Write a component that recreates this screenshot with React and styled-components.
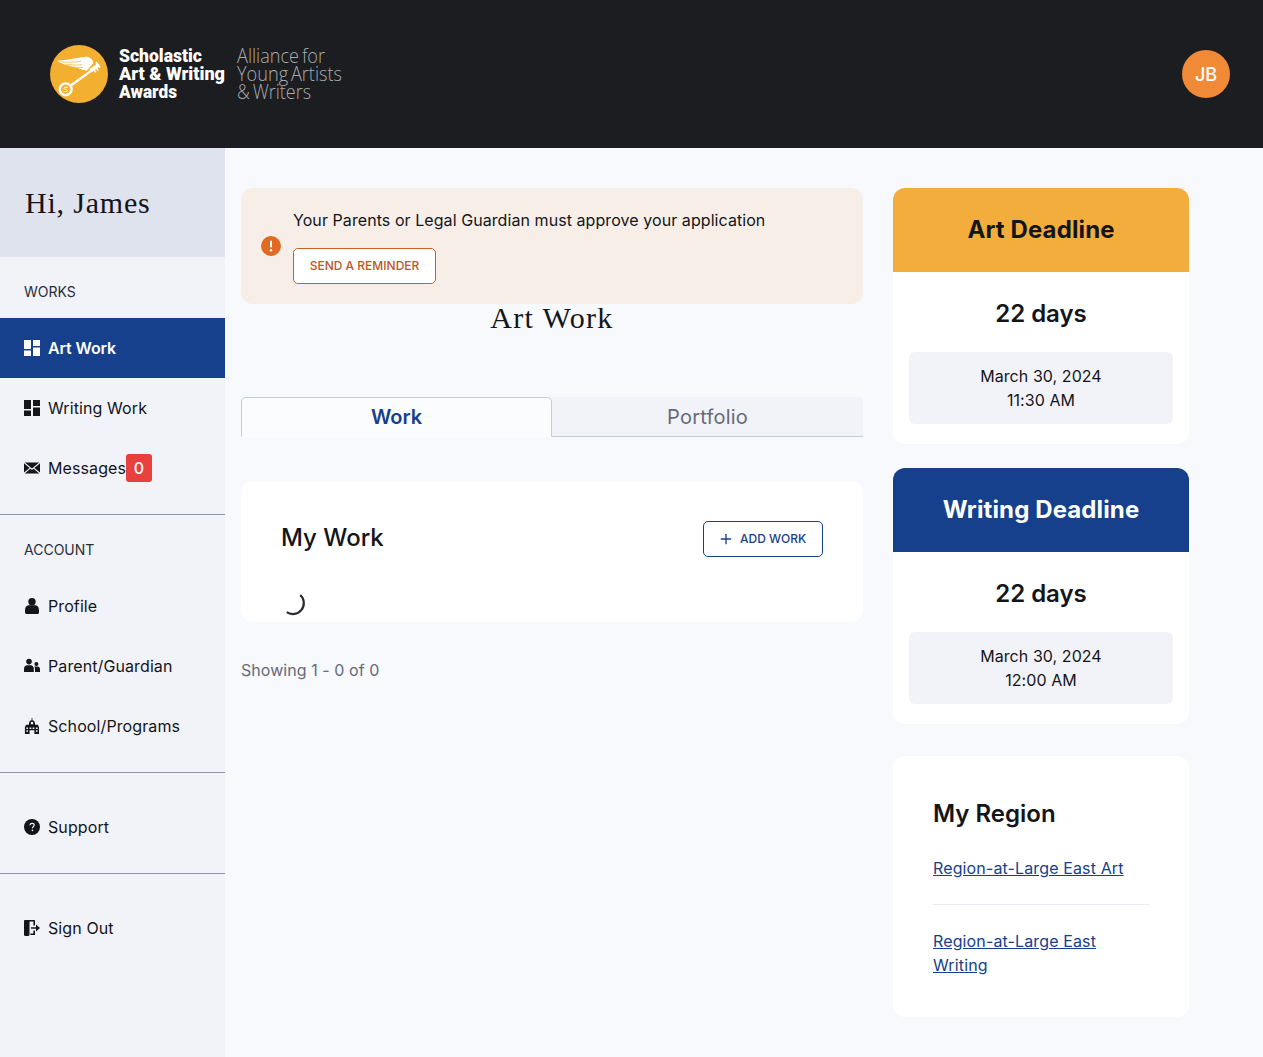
import React from 'react';
import styled, { createGlobalStyle } from 'styled-components';
import { Plus } from 'lucide-react';

const GlobalStyle = createGlobalStyle`
  html, body {
    margin: 0;
    padding: 0;
    background: #f8f9fd;
    font-family: Inter, "Liberation Sans", sans-serif;
    color: #14151a;
  }
  * { box-sizing: border-box; }
`;

const Page = styled.div`
  width: 1263px;
  height: 1057px;
  display: flex;
  flex-direction: column;
  overflow: hidden;
`;

const Header = styled.header`
  height: 148px;
  flex: none;
  background: #1c1d20;
  display: flex;
  align-items: center;
  justify-content: space-between;
  padding: 0 33px 0 50px;
`;

const LogoMark = styled.svg`
  display: block;
  width: 330px;
  height: 66px;
  flex: none;
  margin-top: 8px;
`;

const BrandLine = styled.text`
  font-family: Roboto, sans-serif;
  font-weight: 900;
  font-size: 18.5px;
  fill: #fff;
`;

const TaglineLine = styled.text`
  font-family: "Open Sans", sans-serif;
  font-weight: 300;
  font-size: 19.6px;
  word-spacing: -2px;
  fill: #a9aaad;
`;

const Avatar = styled.div`
  width: 48px;
  height: 48px;
  border-radius: 50%;
  background: #f08a36;
  color: #fff;
  font-size: 18px;
  font-weight: 500;
  display: flex;
  align-items: center;
  justify-content: center;
`;

const Body = styled.div`
  flex: 1;
  display: flex;
  min-height: 0;
`;

const Sidebar = styled.aside`
  width: 225px;
  flex: none;
  background: #f1f3f9;
`;

const Greeting = styled.div`
  height: 109px;
  background: #dfe3ed;
  padding: 35px 0 0 25px;
  font-family: "Liberation Serif", serif;
  font-size: 30px;
  line-height: 40px;
  letter-spacing: 0.8px;
  color: #14151a;
`;

const NavSection = styled.div`
  padding: ${p => p.$padding};
  border-bottom: ${p => (p.$last ? 'none' : '1px solid #8f96ab')};
`;

const SectionLabel = styled.div`
  height: 61px;
  padding: 26px 0 0 24px;
  font-size: 14px;
  line-height: 18px;
  color: #2b2d36;
`;

const NavItem = styled.a`
  height: 60px;
  padding-left: 24px;
  display: flex;
  align-items: center;
  font-size: 16px;
  letter-spacing: ${p => (p.$active ? '-0.1px' : '0.1px')};
  font-weight: ${p => (p.$active ? 600 : 400)};
  color: ${p => (p.$active ? '#fff' : '#14151a')};
  background: ${p => (p.$active ? '#163f8c' : 'transparent')};
`;

const NavIcon = styled.svg`
  width: 16px;
  height: 16px;
  margin-right: 8px;
  flex: none;
  fill: currentColor;
`;

const CountBadge = styled.span`
  width: 26px;
  height: 28px;
  border-radius: 3px;
  background: #e83f3f;
  color: #fff;
  font-size: 16px;
  font-weight: 500;
  display: flex;
  align-items: center;
  justify-content: center;
`;

const Main = styled.main`
  width: 638px;
  flex: none;
  padding: 40px 0 0 16px;
`;

const Notice = styled.div`
  height: 116px;
  background: #f7eee8;
  border-radius: 12px;
  padding: 0 20px;
  display: flex;
  align-items: center;
  gap: 12px;
`;

const NoticeIcon = styled.svg`
  width: 20px;
  height: 20px;
  flex: none;
`;

const NoticeBody = styled.div`
  display: flex;
  flex-direction: column;
  align-items: flex-start;
  gap: 16px;
  font-size: 16px;
  line-height: 24px;
  letter-spacing: 0.07px;
`;

const ReminderButton = styled.button`
  height: 36px;
  width: 143px;
  padding: 0 0 2px;
  border: 1px solid #ce5f22;
  border-radius: 5px;
  background: #fff;
  color: #c1561e;
  font-family: inherit;
  font-size: 12px;
  font-weight: 500;
`;

const PageTitle = styled.h1`
  margin: 0;
  height: 93px;
  text-align: center;
  font-family: "Liberation Serif", serif;
  font-weight: 400;
  font-size: 30px;
  line-height: 28px;
  letter-spacing: 1.3px;
`;

const Tabs = styled.div`
  display: flex;
  height: 40px;
`;

const Tab = styled.div`
  width: 50%;
  display: flex;
  align-items: center;
  justify-content: center;
  font-size: 20px;
  letter-spacing: ${p => (p.$active ? '0' : '0.2px')};
  font-weight: ${p => (p.$active ? 600 : 400)};
  color: ${p => (p.$active ? '#163f8c' : '#646a7a')};
  background: ${p => (p.$active ? '#fbfcfe' : '#f2f3f8')};
  border: 1px solid #c5cbdb;
  border-width: ${p => (p.$active ? '1px 1px 1px 1px' : '0 0 1px 0')};
  border-bottom-color: ${p => (p.$active ? '#fbfcfe' : '#c5cbdb')};
  border-radius: ${p => (p.$active ? '5px 5px 0 0' : '0 5px 0 0')};
`;

const WorkCard = styled.section`
  margin-top: 44px;
  height: 141px;
  background: #fff;
  border-radius: 12px;
  padding: 39px 40px 0;
  overflow: hidden;
`;

const CardHead = styled.div`
  display: flex;
  align-items: center;
  justify-content: space-between;
  height: 36px;
`;

const CardTitle = styled.h2`
  margin: 0;
  font-size: 24px;
  line-height: 32px;
  font-weight: 500;
  color: #14151a;
`;

const AddButton = styled.button`
  width: 120px;
  height: 36px;
  margin-top: 2px;
  border: 1px solid #163f8c;
  border-radius: 5px;
  background: #fff;
  color: #163f8c;
  font-family: inherit;
  font-size: 12px;
  font-weight: 500;
  display: flex;
  align-items: center;
  gap: 6px;
  padding: 0 0 1px 14px;
`;

const Spinner = styled.svg`
  display: block;
  width: 24px;
  height: 24px;
  margin: 36px 0 0 1px;
`;

const Showing = styled.div`
  margin-top: 36px;
  font-size: 16px;
  line-height: 24px;
  letter-spacing: 0.06px;
  color: #646a7a;
`;

const Aside = styled.aside`
  width: 296px;
  flex: none;
  margin-left: 30px;
  padding-top: 40px;
  display: flex;
  flex-direction: column;
`;

const DeadlineCard = styled.section`
  height: 256px;
  margin-bottom: 24px;
  background: #fff;
  border-radius: 12px;
  overflow: hidden;
`;

const DeadlineHead = styled.div`
  height: 84px;
  padding-bottom: 2px;
  display: flex;
  align-items: center;
  justify-content: center;
  font-size: 24px;
  font-weight: 700;
  letter-spacing: 0.12px;
  background: ${p => p.$bg};
  color: ${p => p.$fg};
`;

const Days = styled.div`
  height: 80px;
  padding-top: 2px;
  display: flex;
  align-items: center;
  justify-content: center;
  font-size: 24px;
  font-weight: 600;
`;

const DateBox = styled.div`
  margin: 0 16px;
  height: 72px;
  border-radius: 6px;
  background: #f2f3f8;
  display: flex;
  flex-direction: column;
  align-items: center;
  justify-content: center;
  font-size: 16px;
  line-height: 24px;
  letter-spacing: 0.06px;
`;

const RegionCard = styled.section`
  margin-top: 8px;
  height: 261px;
  background: #fff;
  border-radius: 12px;
  padding: 42px 40px 40px;
`;

const RegionLink = styled.a`
  display: block;
  color: #163f8c;
  font-size: 16px;
  line-height: 24px;
  letter-spacing: 0.13px;
  text-decoration: underline;
`;

const Rule = styled.hr`
  border: 0;
  border-top: 1px solid #e9ebf2;
  margin: 24px 0;
`;

const RegionTitle = styled(CardTitle)`
  margin-bottom: 26px;
  font-weight: 600;
`;

const GridIcon = () => (
  <NavIcon viewBox="0 0 16 16">
    <rect x="0" y="0" width="7" height="9" />
    <rect x="9" y="0" width="7" height="6" />
    <rect x="0" y="10.5" width="7" height="5.5" />
    <rect x="9" y="7.5" width="7" height="8.5" />
  </NavIcon>
);

const MailIcon = () => (
  <NavIcon viewBox="0 0 16 16">
    <path d="M0 3.2 5.6 8 0 12.6Z" />
    <path d="M16 3.2 10.4 8 16 12.6Z" />
    <path d="M.8 2.4h14.4L8 8.6Z" />
    <path d="M.8 13.4 6.3 8.7 8 10.1l1.7-1.4 5.5 4.7Z" />
  </NavIcon>
);

const PersonIcon = () => (
  <NavIcon viewBox="0 0 16 16">
    <circle cx="8" cy="3.7" r="3.7" />
    <path d="M1 12c0-3 1.800-4.800 3.800-4.800h6.400c2 0 3.800 1.800 3.800 4.800v2.200c0 1-.8 1.800-1.800 1.800H2.800c-1 0-1.800-.8-1.800-1.800Z" />
  </NavIcon>
);

const ParentIcon = () => (
  <NavIcon viewBox="0 0 16 16">
    <circle cx="5" cy="3.6" r="2.8" />
    <circle cx="12.4" cy="6" r="2" />
    <path d="M0 14v-3.200C0 8.600 1.400 7.200 3.200 7.200h3.400c1.800 0 3.200 1.400 3.200 3.600V14Z" />
    <path d="M11 14v-3.200c0-1-.3-1.800-.7-2.400h3.200c1.500 0 2.500 1.100 2.500 2.600v3Z" />
  </NavIcon>
);

const SchoolIcon = () => (
  <NavIcon viewBox="0 0 16 16">
    <path
      fillRule="evenodd"
      d="M7.600 0h.8v2.200c1.500.2 2.600 1.500 2.600 3v1.600h3.200v1.600h.8V16H.9V8.400h.8V6.800H5V5.200c0-1.500 1.100-2.800 2.600-3ZM8 3.800a1.300 1.300 0 1 0 0 2.600 1.300 1.300 0 0 0 0-2.600ZM2.400 9.400V11H4V9.400Zm0 2.800v1.600H4v-1.600Zm3.200-2.800V11h1.700V9.400Zm3 0V11h1.700V9.400Zm3.300 0V11h1.700V9.400Zm0 2.800v1.600h1.700v-1.600Zm-6.300 0V16h4.800v-3.800Z"
    />
  </NavIcon>
);

const HelpIcon = () => (
  <NavIcon viewBox="0 0 16 16">
    <circle cx="8" cy="8" r="8" />
    <path d="M5.900 6.200c.1-1.200 1-1.900 2.200-1.900 1.200 0 2.100.7 2.100 1.800 0 1.700-1.800 1.600-1.800 3.100" fill="none" stroke="#f1f3f9" strokeWidth="1.2" />
    <circle cx="8.400" cy="11.400" r=".8" fill="#f1f3f9" />
  </NavIcon>
);

const SignOutIcon = () => (
  <NavIcon viewBox="0 0 16 16">
    <path d="M0 1.200C0 .5.5 0 1.200 0H10c.6 0 1 .4 1 1v4.400H9.400V1.600H5.600l-.1 13.200c0 .7-.6 1.200-1.200 1.200H1.200C.5 16 0 15.500 0 14.800Z" />
    <path d="M9.400 10.600H11V15H6.400v-1.500h3Z" />
    <path d="M7 7.200h5V4.600L16 8l-4 3.400V8.800H7Z" />
  </NavIcon>
);

const Logo = () => (
  <LogoMark viewBox="0 0 330 66">
    <circle cx="29" cy="29" r="29" fill="#f3af2f" />
    <path d="M7 15.700C12 15.400 16 15 20 14.300 24 13.700 28 12.900 31.700 12.300 33.500 12 35.300 11.500 36.700 11.700 39 12 41 13 41.700 14.300 42.800 15.800 43.300 17 43.300 18.300L36.700 25.700C34 25.300 31 24.300 28.300 23.300 25.500 22.500 22.800 21.800 20 21 17.800 20.400 15.500 19.800 13.300 19 11 18 9 16.800 7 15.700Z" fill="#fff" />
    <path d="M11 16.900C17 17.300 24 17.300 31 16.300M16 19.200C21 20 27 20.300 32 19.600M23 21.700C26 22.500 30 22.800 33 22.400" fill="none" stroke="#f3af2f" strokeWidth=".7" />
    <g transform="translate(15.700 44.300) rotate(-36)" fill="#fff">
      <rect x="6" y="-1.200" width="30" height="2.400" />
      <rect x="31" y="-2.400" width="10" height="3.800" />
      <rect x="39.500" y="-4" width="2" height="6.500" />
      <rect x="33.500" y="1" width="1.700" height="3" />
      <rect x="36.500" y="1" width="1.700" height="3" />
    </g>
    <circle cx="15.700" cy="44.300" r="5.900" fill="none" stroke="#fff" strokeWidth="2.400" />
    <path d="M18 42.800C17 41.800 14 41.600 13.800 43.200 13.600 44.900 17.800 44.100 17.600 45.800 17.400 47.200 14.400 47 13.400 46" fill="none" stroke="#fff" strokeWidth=".9" />
    <BrandLine x="69" y="17" textLength="83" lengthAdjust="spacingAndGlyphs">Scholastic</BrandLine>
    <BrandLine x="69" y="35" textLength="106" lengthAdjust="spacingAndGlyphs">Art &amp; Writing</BrandLine>
    <BrandLine x="69" y="53" textLength="58" lengthAdjust="spacingAndGlyphs">Awards</BrandLine>
    <TaglineLine x="187" y="17.500" textLength="88" lengthAdjust="spacingAndGlyphs">Alliance for</TaglineLine>
    <TaglineLine x="187" y="36" textLength="105" lengthAdjust="spacingAndGlyphs">Young Artists</TaglineLine>
    <TaglineLine x="187" y="54" textLength="74" lengthAdjust="spacingAndGlyphs">&amp; Writers</TaglineLine>
  </LogoMark>
);

const NavSectionItems = ({ items }) =>
  items.map(([label, Icon, active, badge]) => (
    <NavItem key={label} $active={active}>
      <Icon />
      {label}
      {badge !== undefined && <CountBadge>{badge}</CountBadge>}
    </NavItem>
  ));

const Deadline = ({ title, bg, fg, date, time }) => (
  <DeadlineCard>
    <DeadlineHead $bg={bg} $fg={fg}>{title}</DeadlineHead>
    <Days>22 days</Days>
    <DateBox>
      <span>{date}</span>
      <span>{time}</span>
    </DateBox>
  </DeadlineCard>
);

const App = () => (
  <Page>
    <GlobalStyle />
    <Header>
      <Logo />
      <Avatar>JB</Avatar>
    </Header>
    <Body>
      <Sidebar>
        <Greeting>Hi, James</Greeting>
        <NavSection $padding="0 0 16px">
          <SectionLabel>WORKS</SectionLabel>
          <NavSectionItems
            items={[
              ['Art Work', GridIcon, true],
              ['Writing Work', GridIcon],
              ['Messages', MailIcon, false, 0],
            ]}
          />
        </NavSection>
        <NavSection $padding="0 0 16px">
          <SectionLabel>ACCOUNT</SectionLabel>
          <NavSectionItems
            items={[
              ['Profile', PersonIcon],
              ['Parent/Guardian', ParentIcon],
              ['School/Programs', SchoolIcon],
            ]}
          />
        </NavSection>
        <NavSection $padding="24px 0 16px">
          <NavSectionItems items={[['Support', HelpIcon]]} />
        </NavSection>
        <NavSection $padding="24px 0 0" $last>
          <NavSectionItems items={[['Sign Out', SignOutIcon]]} />
        </NavSection>
      </Sidebar>
      <Main>
        <Notice>
          <NoticeIcon viewBox="0 0 20 20">
            <circle cx="10" cy="10" r="10" fill="#e06a22" />
            <rect x="9" y="4.600" width="2" height="7" rx="1" fill="#fff" />
            <circle cx="10" cy="14.200" r="1.200" fill="#fff" />
          </NoticeIcon>
          <NoticeBody>
            Your Parents or Legal Guardian must approve your application
            <ReminderButton>SEND A REMINDER</ReminderButton>
          </NoticeBody>
        </Notice>
        <PageTitle>Art Work</PageTitle>
        <Tabs>
          <Tab $active>Work</Tab>
          <Tab>Portfolio</Tab>
        </Tabs>
        <WorkCard>
          <CardHead>
            <CardTitle>My Work</CardTitle>
            <AddButton><Plus size={16} strokeWidth={2} />ADD WORK</AddButton>
          </CardHead>
          <Spinner viewBox="0 0 24 24">
            <path d="M18.300 3A11 11 0 0 1 4.700 20.200" fill="none" stroke="#2a2b30" strokeWidth="2.200" />
          </Spinner>
        </WorkCard>
        <Showing>Showing 1 - 0 of 0</Showing>
      </Main>
      <Aside>
        <Deadline title="Art Deadline" bg="#f3ad3c" fg="#14151a" date="March 30, 2024" time="11:30 AM" />
        <Deadline title="Writing Deadline" bg="#163f8c" fg="#fff" date="March 30, 2024" time="12:00 AM" />
        <RegionCard>
          <RegionTitle>My Region</RegionTitle>
          <RegionLink>Region-at-Large East Art</RegionLink>
          <Rule />
          <RegionLink>Region-at-Large East Writing</RegionLink>
        </RegionCard>
      </Aside>
    </Body>
  </Page>
);

export default App;
